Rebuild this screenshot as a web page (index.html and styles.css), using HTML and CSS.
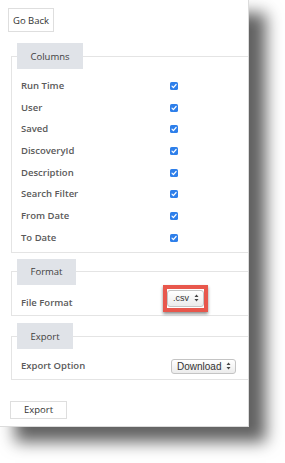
FILE: index.html
```html
<!DOCTYPE html>
<html>
<head>
<meta charset="utf-8">
<link rel="stylesheet" href="styles.css">
</head>
<body>
<div class="panel">
  <button class="btn btn-back">Go Back</button>

  <fieldset class="group group-columns">
    <legend class="tab">Columns</legend>
    <div class="row"><span class="label">Run Time</span><span class="check"><svg viewBox="0 0 8 8" width="8" height="8"><rect width="8" height="8" rx="1.6" fill="#2e7fea"/><path d="M2 4.2 L3.4 5.6 L6.1 2.5" fill="none" stroke="#fff" stroke-width="1.2" stroke-linecap="round" stroke-linejoin="round"/></svg></span></div>
    <div class="row"><span class="label">User</span><span class="check"><svg viewBox="0 0 8 8" width="8" height="8"><rect width="8" height="8" rx="1.6" fill="#2e7fea"/><path d="M2 4.2 L3.4 5.6 L6.1 2.5" fill="none" stroke="#fff" stroke-width="1.2" stroke-linecap="round" stroke-linejoin="round"/></svg></span></div>
    <div class="row"><span class="label">Saved</span><span class="check"><svg viewBox="0 0 8 8" width="8" height="8"><rect width="8" height="8" rx="1.6" fill="#2e7fea"/><path d="M2 4.2 L3.4 5.6 L6.1 2.5" fill="none" stroke="#fff" stroke-width="1.2" stroke-linecap="round" stroke-linejoin="round"/></svg></span></div>
    <div class="row"><span class="label">DiscoveryId</span><span class="check"><svg viewBox="0 0 8 8" width="8" height="8"><rect width="8" height="8" rx="1.6" fill="#2e7fea"/><path d="M2 4.2 L3.4 5.6 L6.1 2.5" fill="none" stroke="#fff" stroke-width="1.2" stroke-linecap="round" stroke-linejoin="round"/></svg></span></div>
    <div class="row"><span class="label">Description</span><span class="check"><svg viewBox="0 0 8 8" width="8" height="8"><rect width="8" height="8" rx="1.6" fill="#2e7fea"/><path d="M2 4.2 L3.4 5.6 L6.1 2.5" fill="none" stroke="#fff" stroke-width="1.2" stroke-linecap="round" stroke-linejoin="round"/></svg></span></div>
    <div class="row"><span class="label">Search Filter</span><span class="check"><svg viewBox="0 0 8 8" width="8" height="8"><rect width="8" height="8" rx="1.6" fill="#2e7fea"/><path d="M2 4.2 L3.4 5.6 L6.1 2.5" fill="none" stroke="#fff" stroke-width="1.2" stroke-linecap="round" stroke-linejoin="round"/></svg></span></div>
    <div class="row"><span class="label">From Date</span><span class="check"><svg viewBox="0 0 8 8" width="8" height="8"><rect width="8" height="8" rx="1.6" fill="#2e7fea"/><path d="M2 4.2 L3.4 5.6 L6.1 2.5" fill="none" stroke="#fff" stroke-width="1.2" stroke-linecap="round" stroke-linejoin="round"/></svg></span></div>
    <div class="row"><span class="label">To Date</span><span class="check"><svg viewBox="0 0 8 8" width="8" height="8"><rect width="8" height="8" rx="1.6" fill="#2e7fea"/><path d="M2 4.2 L3.4 5.6 L6.1 2.5" fill="none" stroke="#fff" stroke-width="1.2" stroke-linecap="round" stroke-linejoin="round"/></svg></span></div>
  </fieldset>

  <fieldset class="group group-format">
    <legend class="tab">Format</legend>
    <div class="row"><span class="label">File Format</span>
      <span class="highlight"><span class="select select-csv"><span class="select-text">.csv</span><svg class="arrows" viewBox="0 0 5 8" width="5" height="8"><path d="M2.5 0.5 L4.5 3 L0.5 3 Z M2.5 7.5 L4.5 5 L0.5 5 Z" fill="#444"/></svg></span></span>
    </div>
  </fieldset>

  <fieldset class="group group-export">
    <legend class="tab">Export</legend>
    <div class="row"><span class="label">Export Option</span>
      <span class="select select-download"><span class="select-text">Download</span><svg class="arrows" viewBox="0 0 5 8" width="5" height="8"><path d="M2.5 0.5 L4.5 3 L0.5 3 Z M2.5 7.5 L4.5 5 L0.5 5 Z" fill="#444"/></svg></span>
    </div>
  </fieldset>

  <button class="btn btn-export">Export</button>
</div>
</body>
</html>
```

FILE: styles.css
```css
html, body {
  margin: 0;
  padding: 0;
  background: #fff;
}

body {
  font-family: "Open Sans", "Liberation Sans", sans-serif;
  font-size: 9.5px;
  color: #444;
  min-height: 463px;
}

.panel {
  width: 248px;
  height: 418px;
  background: #fff;
  border-right: 1px solid #dcdcdc;
  border-bottom: 1px solid #dcdcdc;
  box-shadow: 16px 14px 15px 1px rgba(0, 0, 0, 0.62);
  padding-top: 8px;
  box-sizing: content-box;
  display: flex;
  flex-direction: column;
  align-items: flex-start;
  overflow: hidden;
}

.btn {
  font-family: "Open Sans", "Liberation Sans", sans-serif;
  font-size: 9.5px;
  color: #333;
  background: #fff;
  border: 1px solid #dedede;
  padding: 0;
  margin: 0;
  box-sizing: border-box;
}

.btn-back {
  margin-left: 8px;
  width: 46px;
  height: 24px;
}

.btn-export {
  margin-left: 10px;
  margin-top: 21px;
  width: 57px;
  height: 18px;
}

.group {
  align-self: stretch;
  margin: 0 0 0 11px;
  padding: 0 0 3px 5px;
  border: 1px solid #e4e4e4;
  border-right: none;
  min-width: 0;
}

.group-columns { margin-top: 11px; }
.group-format { margin-top: 6px; padding-bottom: 2px; }
.group-export { margin-top: 7px; padding-bottom: 2px; }

.tab {
  box-sizing: border-box;
  display: flex;
  justify-content: center;
  align-items: center;
  height: 26px;
  padding: 0;
  background: #e0e3e8;
  color: #3f3f3f;
  font-size: 9.5px;
  margin-bottom: 6px;
}

.group-columns .tab { width: 66px; }
.group-format .tab { width: 59px; margin-bottom: 7px; }
.group-export .tab { width: 56px; }

.row {
  display: grid;
  grid-template-columns: 149px auto;
  align-items: center;
  height: 21.7px;
  padding-left: 4px;
}

.label {
  font-weight: 600;
  color: #5a5a5a;
  line-height: 21.7px;
}

.check {
  display: flex;
  width: 8px;
  height: 8px;
}

.highlight {
  display: inline-flex;
  align-self: start;
  margin-top: -7px;
  margin-left: -7px;
  border: 4px solid #e8574c;
  padding: 1px 0;
  width: 45px;
  height: 27px;
  box-sizing: border-box;
  box-shadow: 0 2px 3px rgba(0, 0, 0, 0.45);
  background: #fff;
}

.select {
  display: inline-flex;
  align-items: center;
  justify-content: space-between;
  box-sizing: border-box;
  border: 1px solid #c4c4c4;
  border-radius: 3px;
  background: linear-gradient(#ffffff, #ececec);
  color: #333;
  font-family: "Liberation Sans", "Open Sans", sans-serif;
}

.select-csv {
  width: 37px;
  height: 17px;
  padding: 0 4px 0 5px;
  font-size: 9px;
}

.select-download {
  width: 65px;
  height: 15px;
  margin-left: 1px;
  padding: 0 4px 0 5px;
  font-size: 10px;
}

.arrows { display: block; }
```
